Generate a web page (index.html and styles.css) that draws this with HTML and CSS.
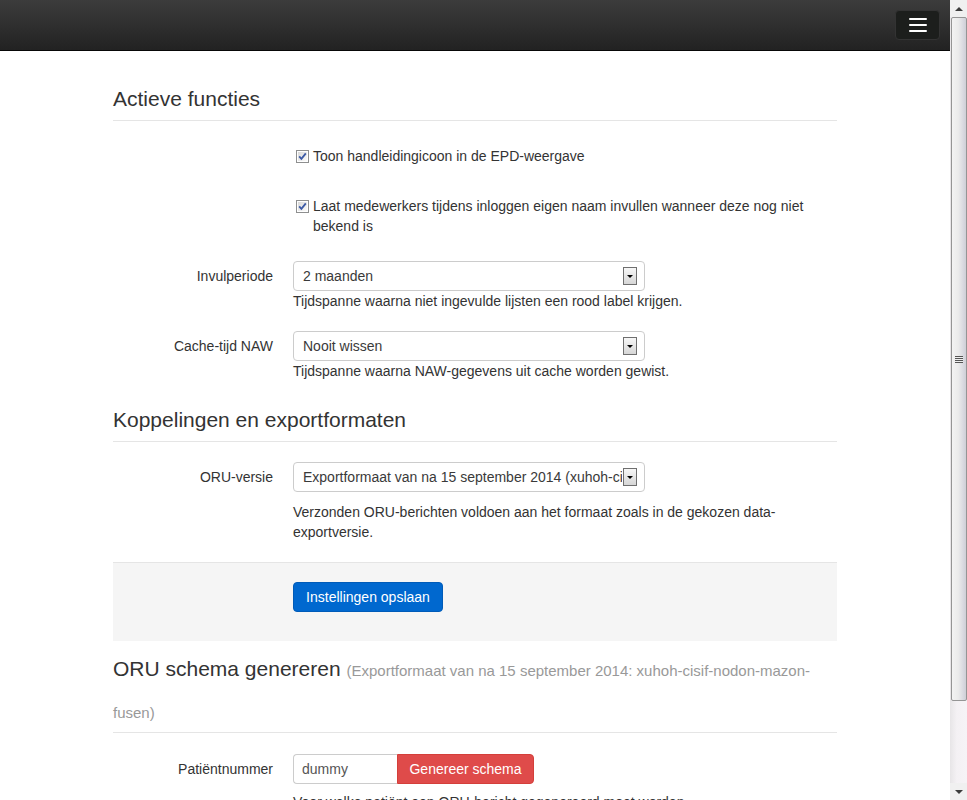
FILE: index.html
```html
<!DOCTYPE html>
<html lang="nl">
<head>
<meta charset="utf-8">
<title>Instellingen</title>
<link rel="stylesheet" href="styles.css">
</head>
<body>
<div class="window">
  <div class="page">
    <nav class="navbar">
      <button class="navbar-toggle" type="button" aria-label="Menu">
        <span class="icon-bar"></span>
        <span class="icon-bar"></span>
        <span class="icon-bar"></span>
      </button>
    </nav>

    <main class="container">
      <h2 class="legend legend-first">Actieve functies</h2>

      <div class="form-group group-check-1">
        <div class="control-label"></div>
        <div class="controls">
          <label class="check">
            <svg class="check-box" width="13" height="13" viewBox="0 0 13 13"><defs><linearGradient id="cbg" x1="0" y1="0" x2="1" y2="1"><stop offset="0" stop-color="#d8d8d8"/><stop offset="1" stop-color="#fbfbfb"/></linearGradient></defs><rect x="0.5" y="0.5" width="12" height="12" fill="#fff" stroke="#8e8f8f"/><rect x="2" y="2" width="9" height="9" fill="url(#cbg)"/><path d="M3.2 6.4 L5.4 8.9 L9.8 3.4" fill="none" stroke="#3b59a5" stroke-width="1.8"/></svg>
            <span>Toon handleidingicoon in de EPD-weergave</span>
          </label>
        </div>
      </div>

      <div class="form-group group-check-2">
        <div class="control-label"></div>
        <div class="controls">
          <label class="check">
            <svg class="check-box" width="13" height="13" viewBox="0 0 13 13"><rect x="0.5" y="0.5" width="12" height="12" fill="#fff" stroke="#8e8f8f"/><rect x="2" y="2" width="9" height="9" fill="url(#cbg)"/><path d="M3.2 6.4 L5.4 8.9 L9.8 3.4" fill="none" stroke="#3b59a5" stroke-width="1.8"/></svg>
            <span>Laat medewerkers tijdens inloggen eigen naam invullen wanneer deze nog niet bekend is</span>
          </label>
        </div>
      </div>

      <div class="form-group group-select-1">
        <div class="control-label">Invulperiode</div>
        <div class="controls">
          <div class="select"><span class="select-text">2 maanden</span><span class="select-arrow"></span></div>
          <p class="help">Tijdspanne waarna niet ingevulde lijsten een rood label krijgen.</p>
        </div>
      </div>

      <div class="form-group group-select-2">
        <div class="control-label">Cache-tijd NAW</div>
        <div class="controls">
          <div class="select"><span class="select-text">Nooit wissen</span><span class="select-arrow"></span></div>
          <p class="help">Tijdspanne waarna NAW-gegevens uit cache worden gewist.</p>
        </div>
      </div>

      <h2 class="legend legend-second">Koppelingen en exportformaten</h2>

      <div class="form-group group-select-3">
        <div class="control-label">ORU-versie</div>
        <div class="controls">
          <div class="select"><span class="select-text">Exportformaat van na 15 september 2014 (xuhoh-cisif-nodon-mazon-fusen)</span><span class="select-arrow"></span></div>
          <p class="help help-spaced">Verzonden ORU-berichten voldoen aan het formaat zoals in de gekozen data-exportversie.</p>
        </div>
      </div>

      <div class="form-actions">
        <div class="control-label"></div>
        <div class="controls">
          <button class="btn btn-primary" type="button">Instellingen opslaan</button>
        </div>
      </div>

      <h2 class="legend legend-third">ORU schema genereren <small class="legend-sub">(Exportformaat van na 15 september 2014: xuhoh-cisif-nodon-mazon-fusen)</small></h2>

      <div class="form-group group-patient">
        <div class="control-label">Patiëntnummer</div>
        <div class="controls">
          <div class="input-group">
            <span class="input">dummy</span>
            <button class="btn btn-danger" type="button">Genereer schema</button>
          </div>
          <p class="help help-patient">Voor welke patiënt een ORU-bericht gegenereerd moet worden.</p>
        </div>
      </div>
    </main>
  </div>

  <div class="scrollbar" aria-hidden="true">
    <div class="sb-arrow sb-up"></div>
    <div class="sb-thumb"><span class="sb-grip"></span></div>
    <div class="sb-track"></div>
    <div class="sb-arrow sb-down"></div>
  </div>
</div>
</body>
</html>
```

FILE: styles.css
```css
* {
  box-sizing: border-box;
}

html, body {
  margin: 0;
  padding: 0;
  height: 800px;
  overflow: hidden;
}

body {
  font-family: "Liberation Sans", Arial, sans-serif;
  font-size: 14px;
  line-height: 20px;
  color: #333;
  background: #fff;
}

.window {
  display: flex;
  width: 967px;
  height: 800px;
}

.page {
  width: 950px;
  height: 800px;
  overflow: hidden;
  flex: none;
}

/* Navbar */
.navbar {
  height: 51px;
  background: linear-gradient(#3c3c3c, #222222);
  border-bottom: 1px solid #080808;
  display: flex;
  justify-content: flex-end;
  align-items: flex-start;
}

.navbar-toggle {
  width: 45px;
  height: 30px;
  margin: 10px 10px 0 0;
  padding: 0;
  background: #1c1e1c;
  border: 1px solid #333;
  border-radius: 4px;
  display: flex;
  flex-direction: column;
  align-items: center;
  justify-content: center;
  gap: 4px;
}

.icon-bar {
  display: block;
  width: 18px;
  height: 2px;
  background: #fff;
  border-radius: 1px;
}

/* Content */
.container {
  width: 724px;
  margin-left: 113px;
}

.legend {
  margin: 0;
  font-size: 21px;
  font-weight: normal;
  line-height: 42px;
  color: #333;
  border-bottom: 1px solid #e5e5e5;
}

.legend-first { margin-top: 27px; }
.legend-second { margin-top: 18px; }
.legend-third { margin-top: 7px; }

.legend-sub {
  font-size: 15px;
  line-height: 1;
  color: #999;
}

.form-group,
.form-actions {
  display: flex;
  gap: 20px;
}

.control-label {
  width: 160px;
  flex: none;
  text-align: right;
  padding-top: 5px;
}

.controls {
  flex: 1;
  min-width: 0;
}

.group-check-1 { margin-top: 25px; }
.group-check-2 { margin-top: 30px; }
.group-select-1 { margin-top: 25px; }
.group-select-2 { margin-top: 20px; }
.group-select-3 { margin-top: 20px; }
.group-patient { margin-top: 21px; }

.check {
  display: flex;
  align-items: flex-start;
  padding-left: 3px;
}

.check-box {
  flex: none;
  margin: 4px 4px 0 0;
}

.select {
  width: 352px;
  height: 30px;
  border: 1px solid #ccc;
  border-radius: 4px;
  background: #fff;
  display: flex;
  align-items: center;
  padding: 0 7px 0 9px;
  gap: 1px;
}

.select-text {
  flex: 1;
  min-width: 0;
  white-space: nowrap;
  overflow: hidden;
  color: #3a3a3a;
}

.select-arrow {
  flex: none;
  width: 14px;
  height: 18px;
  border: 1px solid #6f6f6f;
  background: linear-gradient(#f7f7f7, #d6d6d6);
  display: flex;
  align-items: center;
  justify-content: center;
}

.select-arrow::before {
  content: "";
  border-left: 3px solid transparent;
  border-right: 3px solid transparent;
  border-top: 3px solid #000;
}

.help {
  margin: 0;
}

.help-spaced { margin-top: 10px; }
.help-patient { margin-top: 8px; }

/* Actions */
.form-actions {
  margin-top: 20px;
  background: #f5f5f5;
  border-top: 1px solid #e5e5e5;
  padding: 19px 0 29px;
}

.form-actions .control-label {
  padding-top: 0;
}

.btn {
  height: 30px;
  padding: 0 8px;
  font-family: "Liberation Sans", Arial, sans-serif;
  font-size: 14px;
  color: #fff;
  border-radius: 4px;
  white-space: nowrap;
  cursor: pointer;
}

.btn-primary {
  width: 150px;
  background: #0068cf;
  border: 1px solid #005bb8;
}

.input-group {
  display: flex;
}

.input {
  width: 104px;
  height: 30px;
  border: 1px solid #ccc;
  border-right: 0;
  border-radius: 4px 0 0 4px;
  padding: 0 8px;
  display: flex;
  align-items: center;
  color: #555;
}

.btn-danger {
  width: 137px;
  background: #df4b4a;
  border: 1px solid #d43f3a;
  border-radius: 0 4px 4px 0;
}

/* Scrollbar */
.scrollbar {
  width: 17px;
  flex: none;
  height: 800px;
  display: flex;
  flex-direction: column;
  background: linear-gradient(90deg, #e7e5e7, #f4f1f4 40%, #f6f3f6);
}

.sb-arrow {
  height: 17px;
  flex: none;
  display: flex;
  align-items: center;
  justify-content: center;
  background: #f0f0f0;
}

.sb-up::before {
  content: "";
  border-left: 4px solid transparent;
  border-right: 4px solid transparent;
  border-bottom: 4px solid #3c3c3c;
}

.sb-down::before {
  content: "";
  border-left: 4px solid transparent;
  border-right: 4px solid transparent;
  border-top: 4px solid #3c3c3c;
}

.sb-thumb {
  height: 684px;
  flex: none;
  margin: 0 0 0 1px;
  border: 1px solid #959595;
  border-radius: 2px;
  background: linear-gradient(90deg, #f3f3f3, #ebebeb 45%, #d9d9e0 80%, #cfcfd6);
  display: flex;
  align-items: center;
  justify-content: center;
}

.sb-grip {
  width: 8px;
  height: 7px;
  background: repeating-linear-gradient(#555 0 1px, #eee 1px 2px);
}

.sb-track {
  flex: 1;
}
```
